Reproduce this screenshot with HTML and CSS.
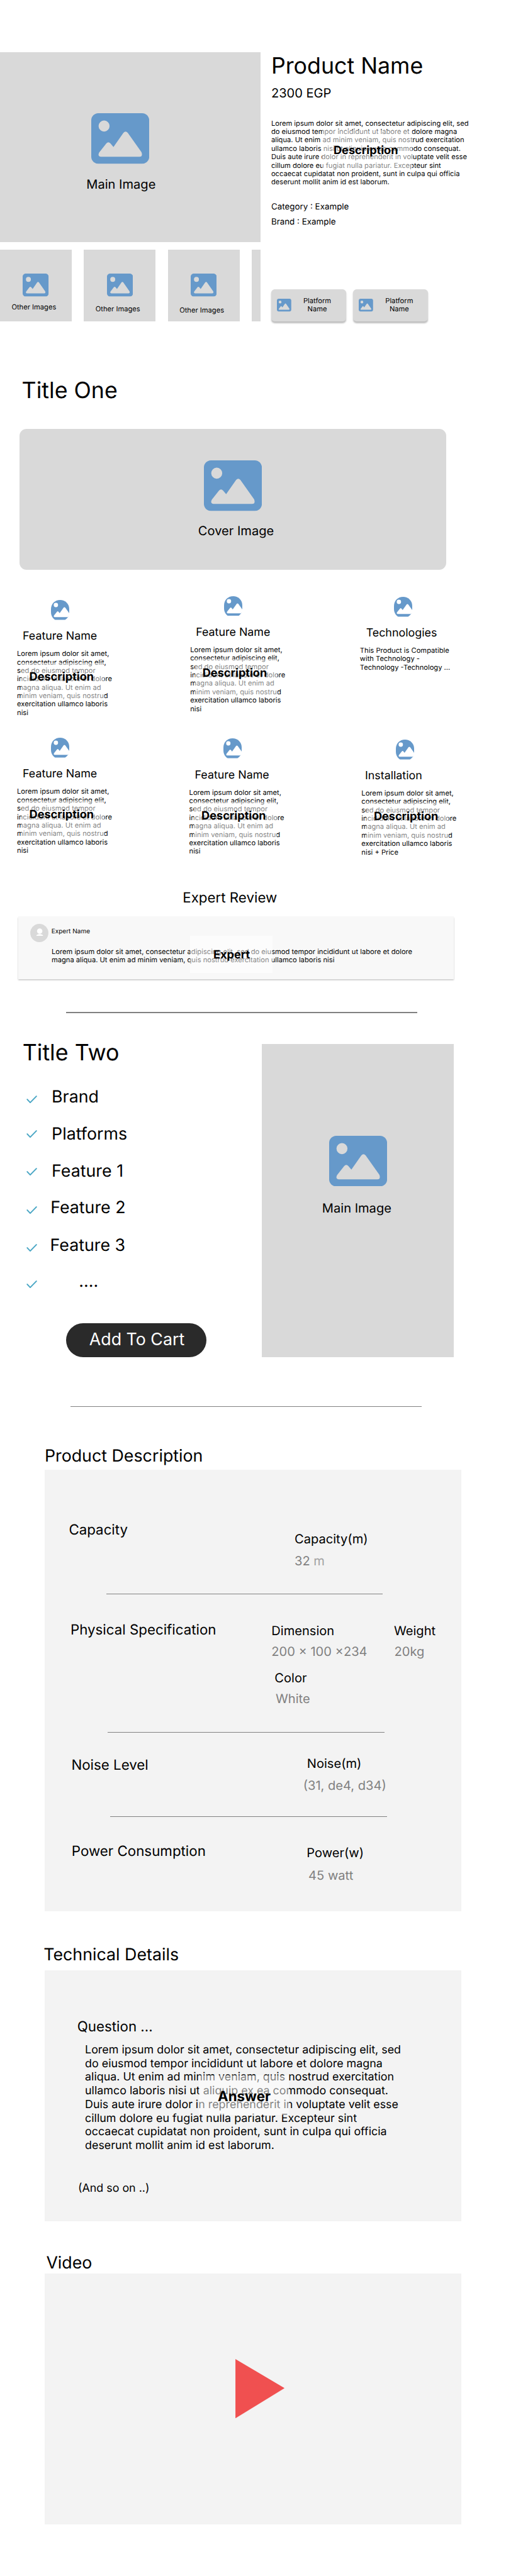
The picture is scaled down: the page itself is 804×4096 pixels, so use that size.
FILE: index.html
```html
<!DOCTYPE html>
<html lang="en">
<head>
<meta charset="utf-8">
<title>Product Name</title>
<link rel="stylesheet" href="styles.css">
</head>
<body>
<svg class="defs" width="0" height="0" aria-hidden="true">
  <symbol id="picture" viewBox="0 0 165 144" preserveAspectRatio="none">
    <path fill="#6699ca" fill-rule="evenodd" d="M20 0H145C156 0 165 9 165 20V124C165 135 156 144 145 144H20C9 144 0 135 0 124V20C0 9 9 0 20 0ZM36.500 20.800a15.700 15.700 0 1 0 0 31.400a15.700 15.700 0 1 0 0-31.400ZM22.500 112L43 86Q48.700 79.500 54.500 86L63.300 96.500L91.500 56Q97.700 48.500 104 56L143 111Q147.500 124 137 124H28Q17 123 22.500 112Z"/>
  </symbol>
  <symbol id="picture-round" viewBox="0 0 52 57" preserveAspectRatio="none">
    <path fill="#6699ca" d="M26 0C41 0 52 11 52 26V36C52 45 48 52 40 57H12C5 52 0 45 0 34V26C0 11 11 0 26 0Z"/>
    <circle cx="14" cy="14.300" r="6.200" fill="#fff"/>
    <path fill="#fff" d="M8.800 44L17 33.500Q19.200 31 21.500 33.500L24.700 37.700L35.800 22Q38.300 18.800 40.800 22L52.500 38.500V44L48 49H11Q6.500 48.500 8.800 44Z"/>
  </symbol>
  <symbol id="check" viewBox="0 0 30 22">
    <path fill="none" stroke="#4ba7c5" stroke-width="3.600" stroke-linecap="round" stroke-linejoin="round" d="M2 11L10.500 20L28 2"/>
  </symbol>
</svg>

<main class="page">
  <section class="hero">
    <div class="gallery">
      <figure class="main-image">
        <svg class="icon-lg"><use href="#picture"/></svg>
        <figcaption class="t36">Main Image</figcaption>
      </figure>
      <div class="thumbs">
        <figure class="thumb"><svg class="icon-md"><use href="#picture"/></svg><figcaption class="t20">Other Images</figcaption></figure>
        <figure class="thumb thumb-b"><svg class="icon-md"><use href="#picture"/></svg><figcaption class="t20">Other Images</figcaption></figure>
        <figure class="thumb thumb-c"><svg class="icon-md"><use href="#picture"/></svg><figcaption class="t20">Other Images</figcaption></figure>
        <figure class="thumb"></figure>
      </div>
    </div>
    <div class="info">
      <h1 class="t64">Product Name</h1>
      <p class="price t36">2300 EGP</p>
      <div class="blurb t20">Lorem ipsum dolor sit amet, consectetur adipiscing elit, sed<br>do eiusmod tempor incididunt ut labore et dolore magna<br>aliqua. Ut enim ad minim veniam, quis nostrud exercitation<br>ullamco laboris nisi ut aliquip ex ea commodo consequat.<br>Duis aute irure dolor in reprehenderit in voluptate velit esse<br>cillum dolore eu fugiat nulla pariatur. Excepteur sint<br>occaecat cupidatat non proident, sunt in culpa qui officia<br>deserunt mollit anim id est laborum.<span class="veil">Description</span></div>
      <p class="category t24">Category : Example</p>
      <p class="brand t24">Brand : Example</p>
      <div class="platforms">
        <div class="platform"><svg class="icon-sm"><use href="#picture"/></svg><span class="t20">Platform<br>Name</span></div>
        <div class="platform"><svg class="icon-sm"><use href="#picture"/></svg><span class="t20">Platform<br>Name</span></div>
      </div>
    </div>
  </section>

  <h2 class="title-one t64">Title One</h2>
  <figure class="cover">
    <svg class="icon-lg"><use href="#picture"/></svg>
    <figcaption class="t36">Cover Image</figcaption>
  </figure>

  <section class="features">
    <article class="feature f1">
      <svg class="icon-round"><use href="#picture-round"/></svg>
      <h3 class="t32">Feature Name</h3>
      <div class="feature-text t20">Lorem ipsum dolor sit amet,<br>consectetur adipiscing elit,<br>sed do eiusmod tempor<br>incididunt ut labore et dolore<br>magna aliqua. Ut enim ad<br>minim veniam, quis nostrud<br>exercitation ullamco laboris<br>nisi<span class="veil">Description</span></div>
    </article>
    <article class="feature f2">
      <svg class="icon-round"><use href="#picture-round"/></svg>
      <h3 class="t32">Feature Name</h3>
      <div class="feature-text t20">Lorem ipsum dolor sit amet,<br>consectetur adipiscing elit,<br>sed do eiusmod tempor<br>incididunt ut labore et dolore<br>magna aliqua. Ut enim ad<br>minim veniam, quis nostrud<br>exercitation ullamco laboris<br>nisi<span class="veil">Description</span></div>
    </article>
    <article class="feature f3">
      <svg class="icon-round"><use href="#picture-round"/></svg>
      <h3 class="t32">Technologies</h3>
      <div class="feature-text t20">This Product is Compatible<br>with Technology -<br>Technology -Technology ...</div>
    </article>
    <article class="feature f4">
      <svg class="icon-round"><use href="#picture-round"/></svg>
      <h3 class="t32">Feature Name</h3>
      <div class="feature-text t20">Lorem ipsum dolor sit amet,<br>consectetur adipiscing elit,<br>sed do eiusmod tempor<br>incididunt ut labore et dolore<br>magna aliqua. Ut enim ad<br>minim veniam, quis nostrud<br>exercitation ullamco laboris<br>nisi<span class="veil">Description</span></div>
    </article>
    <article class="feature f5">
      <svg class="icon-round"><use href="#picture-round"/></svg>
      <h3 class="t32">Feature Name</h3>
      <div class="feature-text t20">Lorem ipsum dolor sit amet,<br>consectetur adipiscing elit,<br>sed do eiusmod tempor<br>incididunt ut labore et dolore<br>magna aliqua. Ut enim ad<br>minim veniam, quis nostrud<br>exercitation ullamco laboris<br>nisi<span class="veil">Description</span></div>
    </article>
    <article class="feature f6">
      <svg class="icon-round"><use href="#picture-round"/></svg>
      <h3 class="t32">Installation</h3>
      <div class="feature-text t20">Lorem ipsum dolor sit amet,<br>consectetur adipiscing elit,<br>sed do eiusmod tempor<br>incididunt ut labore et dolore<br>magna aliqua. Ut enim ad<br>minim veniam, quis nostrud<br>exercitation ullamco laboris<br>nisi + Price<span class="veil">Description</span></div>
    </article>
  </section>

  <h2 class="review-title t40">Expert Review</h2>
  <section class="review">
    <header class="reviewer">
      <svg class="avatar" viewBox="0 0 52 52">
        <ellipse cx="26" cy="26" rx="25.800" ry="26" fill="#d9d9d9"/>
        <ellipse cx="27" cy="20.500" rx="7.700" ry="7.700" fill="#fff"/>
        <path d="M17 34Q19 29 27 29T37 34Z" fill="#fff"/>
      </svg>
      <span class="t18">Expert Name</span>
    </header>
    <div class="review-text t20">Lorem ipsum dolor sit amet, consectetur adipiscing elit, sed do eiusmod tempor incididunt ut labore et dolore<br>magna aliqua. Ut enim ad minim veniam, quis nostrud exercitation ullamco laboris nisi<span class="veil">Expert</span></div>
  </section>
  <hr class="rule rule-a">

  <section class="summary">
    <div class="summary-left">
      <h2 class="t64">Title Two</h2>
      <ul class="checks t48">
        <li class="c1"><svg class="check"><use href="#check"/></svg>Brand</li>
        <li class="c2"><svg class="check"><use href="#check"/></svg>Platforms</li>
        <li class="c3"><svg class="check"><use href="#check"/></svg>Feature 1</li>
        <li class="c4"><svg class="check"><use href="#check"/></svg>Feature 2</li>
        <li class="c5"><svg class="check"><use href="#check"/></svg>Feature 3</li>
        <li class="c6"><svg class="check"><use href="#check"/></svg>....</li>
      </ul>
      <button class="cart t48">Add To Cart</button>
    </div>
    <figure class="side-image">
      <svg class="icon-lg"><use href="#picture"/></svg>
      <figcaption class="t36">Main Image</figcaption>
    </figure>
  </section>
  <hr class="rule rule-b">

  <h2 class="pd-title t48">Product Description</h2>
  <section class="panel specs">
    <div class="spec capacity">
      <h3 class="t40">Capacity</h3>
      <dl class="t36"><dt>Capacity(m)</dt><dd>32 <span class="unit">m</span></dd></dl>
    </div>
    <hr class="rule">
    <div class="spec physical">
      <h3 class="t40">Physical Specification</h3>
      <div class="physical-values t36">
        <dl><dt>Dimension</dt><dd>200 × 100 ×234</dd></dl>
        <dl class="weight"><dt>Weight</dt><dd>20kg</dd></dl>
        <dl class="color"><dt>Color</dt><dd>White</dd></dl>
      </div>
    </div>
    <hr class="rule">
    <div class="spec noise">
      <h3 class="t40">Noise Level</h3>
      <dl class="t36"><dt>Noise(m)</dt><dd>(31, de4, d34)</dd></dl>
    </div>
    <hr class="rule">
    <div class="spec power">
      <h3 class="t40">Power Consumption</h3>
      <dl class="t36"><dt>Power(w)</dt><dd>45 watt</dd></dl>
    </div>
  </section>

  <h2 class="td-title t48">Technical Details</h2>
  <section class="panel qa">
    <h3 class="t40">Question ...</h3>
    <div class="answer t32">Lorem ipsum dolor sit amet, consectetur adipiscing elit, sed<br>do eiusmod tempor incididunt ut labore et dolore magna<br>aliqua. Ut enim ad minim veniam, quis nostrud exercitation<br>ullamco laboris nisi ut aliquip ex ea commodo consequat.<br>Duis aute irure dolor in reprehenderit in voluptate velit esse<br>cillum dolore eu fugiat nulla pariatur. Excepteur sint<br>occaecat cupidatat non proident, sunt in culpa qui officia<br>deserunt mollit anim id est laborum.<span class="veil">Answer</span></div>
    <p class="more t32">(And so on ..)</p>
  </section>

  <h2 class="video-title t48">Video</h2>
  <section class="panel video">
    <svg class="play" viewBox="0 0 140 169"><path d="M.500 1L139 83L.500 168Z" fill="#f05050" stroke="#f33a3a"/></svg>
  </section>
</main>
</body>
</html>
```
FILE: styles.css
```css
/* 1rem = 100 design units */
html { font-size: 55.82px; }

* { box-sizing: border-box; margin: 0; padding: 0; }

body {
  width: 804px;
  background: #fff;
  color: #000;
  font-family: Inter, "Liberation Sans", sans-serif;
  font-optical-sizing: none;
  text-rendering: geometricPrecision;
  white-space: nowrap;
}

h1, h2, h3 { font-weight: 400; }
svg { display: block; flex: none; }
ul { list-style: none; }
.defs { position: absolute; }

.page { width: 804px; height: 4096px; overflow: hidden; padding-top: 1.48rem; }

.t64 { font-size: .64rem; line-height: .774rem; }
.t48 { font-size: .48rem; line-height: .581rem; }
.t40 { font-size: .4rem; line-height: .484rem; }
.t36 { font-size: .36rem; line-height: .436rem; }
.t32 { font-size: .32rem; line-height: .387rem; }
.t24 { font-size: .24rem; line-height: .29rem; }
.t20 { font-size: .2rem; line-height: .24rem; }
.t18 { font-size: .18rem; line-height: .218rem; }

.icon-lg { width: 1.65rem; height: 1.44rem; }
.icon-md { width: .74rem; height: .654rem; }
.icon-sm { width: .41rem; height: .366rem; }
.icon-round { width: .52rem; height: .57rem; }

/* translucent label laid over a text block */
.veil {
  position: absolute;
  width: 2.36rem;
  height: 1.06rem;
  background: rgba(255, 255, 255, .5);
  font-size: .325rem;
  font-weight: 700;
  line-height: .387rem;
}

/* hero */
.hero { display: flex; height: 7.67rem; }
.gallery { width: 7.41rem; flex: none; }
.main-image { height: 5.42rem; padding: 1.75rem 0 0 2.59rem; background: #d9d9d9; }
.main-image figcaption { margin: .36rem 0 0 -.13rem; }
.thumbs { display: flex; gap: .35rem; margin-top: .21rem; overflow: hidden; }
.thumb { flex: none; width: 2.04rem; height: 2.04rem; padding-top: .69rem; background: #d9d9d9; }
.thumb .icon-md { margin-left: .65rem; }
.thumb figcaption { margin: .19rem 0 0 .33rem; }
.thumb-b figcaption { margin-top: .235rem; }
.thumb-c figcaption { margin-top: .275rem; }

.info { padding-left: .31rem; }
.price { margin-top: .177rem; }
.blurb { position: relative; margin-top: .53rem; }
.blurb .veil { left: 1.45rem; top: .31rem; width: 2.56rem; height: 1.13rem; padding: .39rem 0 0 .325rem; }
.category { margin-top: .435rem; }
.brand { margin-top: .144rem; }
.platforms { display: flex; gap: .21rem; margin-top: 1.765rem; }
.platform {
  display: flex;
  align-items: center;
  width: 2.125rem;
  height: .91rem;
  padding-left: .16rem;
  border-radius: .1rem;
  background: #d9d9d9;
  box-shadow: 0 .04rem .04rem rgba(0, 0, 0, .25);
}
.platform span { width: 1.48rem; text-align: center; }

/* cover */
.title-one { margin: 1.59rem 0 0 .62rem; }
.cover {
  width: 12.15rem;
  height: 4.03rem;
  margin: .696rem 0 0 .55rem;
  padding: .91rem 0 0 5.25rem;
  border-radius: .2rem;
  background: #d9d9d9;
}
.cover figcaption { margin: .345rem 0 0 -.16rem; }

/* features */
.features {
  display: grid;
  grid-template: 4.04rem 4.33rem / 4.93rem 4.83rem 3rem;
  margin-top: .73rem;
  padding-left: .485rem;
}
.feature .icon-round { margin-left: .97rem; }
.feature h3 { margin: .275rem 0 0 .16rem; }
.feature-text { position: relative; margin-top: .187rem; }
.feature-text .veil { left: .13rem; top: .375rem; padding: .217rem 0 0 .22rem; }
.f1 { padding-top: .12rem; }
.f2 { padding-top: .007rem; }
.f3 { padding-top: .028rem; }
.f3 h3 { margin-left: .175rem; }
.f5 { padding-top: .03rem; margin-left: -.03rem; }
.f4 { padding-top: .008rem; }
.f6 { padding-top: .054rem; margin-left: .045rem; }
.f6 h3 { margin-left: .1rem; }

/* expert review */
.review-title { margin-left: 5.2rem; }
.review {
  width: 12.41rem;
  height: 1.8rem;
  margin: .274rem 0 0 .514rem;
  padding: .22rem 0 0 .35rem;
  background: #f8f8f8;
  box-shadow: 0 .04rem .04rem rgba(0, 0, 0, .25);
}
.reviewer { display: flex; gap: .08rem; }
.reviewer span { margin-top: .116rem; }
.avatar { width: .52rem; height: .52rem; }
.review-text { position: relative; margin: .16rem 0 0 .605rem; }
.review-text .veil { left: 3.935rem; top: -.337rem; padding: .36rem 0 0 .67rem; }

.rule { height: .02rem; border: 0; background: #808080; }
.rule-a { width: 10rem; margin: .937rem 0 0 1.88rem; }
.rule-b { width: 10rem; margin: 1.39rem 0 0 2.01rem; }

/* summary */
.summary { display: flex; margin-top: .74rem; }
.summary-left { width: 7.457rem; flex: none; }
.summary-left h2 { margin-left: .64rem; }
.checks {
  display: grid;
  grid-template-rows: 1.064rem 1.05rem 1.043rem 1.078rem 1.022rem .58rem;
  margin: .59rem 0 0 .75rem;
}
.checks li { display: flex; gap: .415rem; }
.check { width: .306rem; height: .22rem; }
.c1 .check { margin-top: .246rem; }
.c2 .check { margin-top: .176rem; }
.c3 .check { margin-top: .205rem; }
.c4 .check, .c5 .check { margin-top: .24rem; }
.c6 .check { margin-top: .26rem; }
.checks .c4 { gap: .38rem; }
.checks .c5 { gap: .37rem; }
.checks .c6 { gap: 1.19rem; }
.cart {
  display: block;
  width: 3.99rem;
  height: .97rem;
  margin: .9rem 0 0 1.88rem;
  padding: 0 0 .08rem .66rem;
  border: 0;
  border-radius: .485rem;
  background: #2a2a2a;
  color: #fff;
  font-family: inherit;
  text-align: left;
}
.side-image {
  width: 5.465rem;
  height: 8.92rem;
  margin-top: .14rem;
  padding: 2.617rem 0 0 1.913rem;
  background: #d9d9d9;
}
.side-image figcaption { margin: .41rem 0 0 -.2rem; }

/* panels */
.panel { width: 11.845rem; margin-left: 1.28rem; background: #f3f3f3; }
.pd-title { margin: 1.105rem 0 0 1.27rem; }
.specs { height: 12.57rem; margin-top: .114rem; padding-top: 1.46rem; }
.spec { display: flex; }
.spec h3 { flex: none; }
.spec dd { color: #808080; margin-top: .155rem; }
.specs .rule { width: 7.88rem; }

.capacity { margin-left: .68rem; }
.capacity h3 { width: 6.425rem; }
.capacity dl { margin-top: .288rem; }
.capacity dd { margin-top: .194rem; }
.capacity .unit { color: #a3a3a3; }
.capacity + .rule { margin: .71rem 0 0 1.74rem; }

.physical { margin: .76rem 0 0 .725rem; }
.physical h3 { width: 5.722rem; }
.physical-values { display: grid; grid-template-columns: 3.488rem auto; row-gap: .315rem; margin-top: .07rem; }
.weight dd { margin-left: .01rem; }
.color { padding-left: .09rem; }
.color dd { margin-left: .03rem; }
.physical + .rule { margin: .715rem 0 0 1.79rem; }

.noise { margin: .66rem 0 0 .752rem; }
.noise h3 { width: 6.708rem; margin-top: .02rem; }
.noise dd { margin: .194rem 0 0 -.11rem; }
.noise + .rule { margin: .665rem 0 0 1.86rem; }

.power { margin: .722rem 0 0 .76rem; }
.power h3 { width: 6.69rem; }
.power dl { margin-top: .08rem; }
.power dd { margin: .214rem 0 0 .05rem; }

.td-title { margin: .945rem 0 0 1.24rem; }
.qa { height: 7.147rem; margin-top: .165rem; padding-top: 1.36rem; }
.qa h3 { margin-left: .92rem; }
.answer { position: relative; margin: .224rem 0 0 1.14rem; line-height: .39rem; }
.answer .veil {
  left: 3.25rem;
  top: .91rem;
  width: 2.56rem;
  height: 1.13rem;
  padding: .37rem 0 0 .53rem;
  font-size: .4rem;
  line-height: .484rem;
}
.more { margin: .826rem 0 0 .94rem; }

.video-title { margin: .896rem 0 0 1.315rem; }
.video { height: 7.15rem; margin-top: .006rem; padding: 2.43rem 0 0 5.414rem; }
.play { width: 1.4rem; height: 1.69rem; }
```
